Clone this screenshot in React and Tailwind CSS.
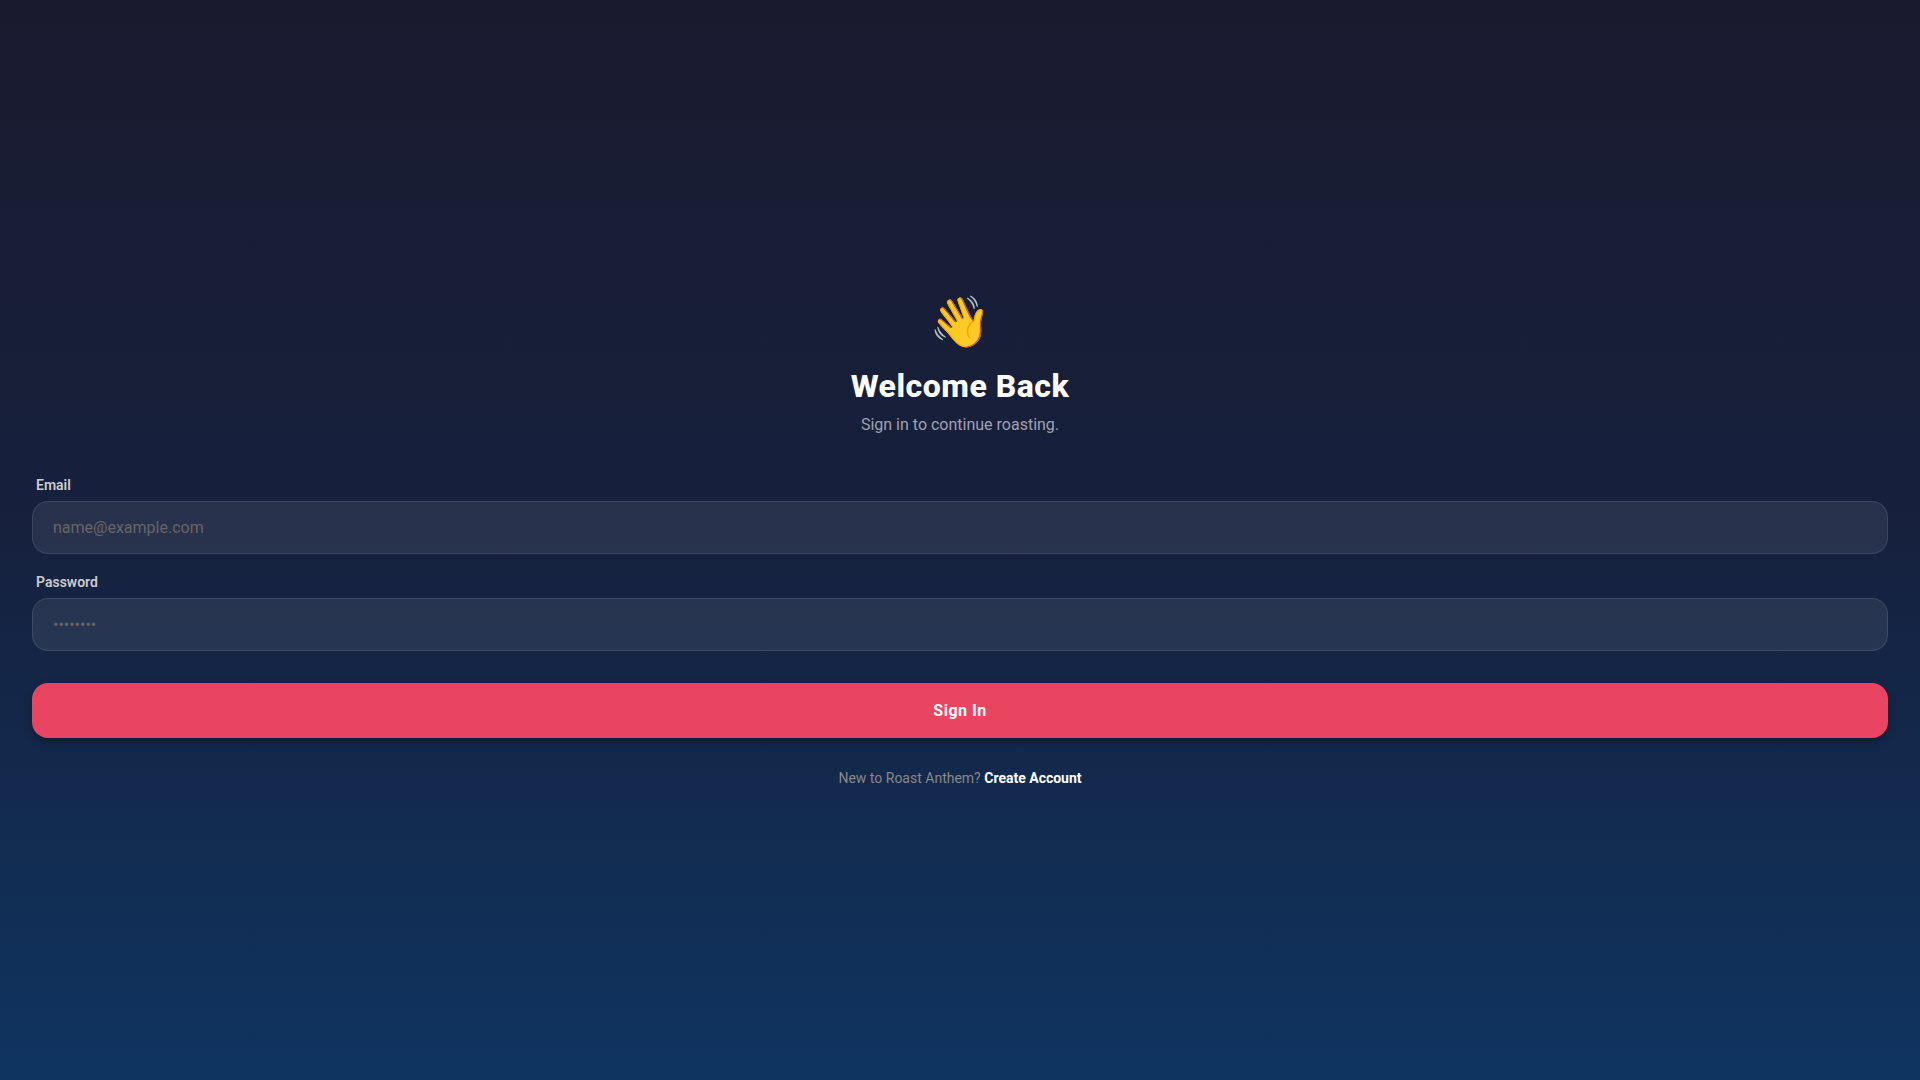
import React, { useState } from "react";

const inputClass =
  "w-full rounded-2xl border border-white/10 bg-white/8 px-5 py-4 text-base leading-[19px] text-white outline-none placeholder:text-[#666666] focus:border-[#e94560]";

const labelClass = "mb-2 ml-1 block text-sm leading-4 font-semibold text-[#cccccc]";

export default function App() {
  const [email, setEmail] = useState("");
  const [password, setPassword] = useState("");

  const handleSubmit = (e) => {
    e.preventDefault();
  };

  return (
    <main className="flex min-h-screen flex-col justify-center bg-linear-to-b/srgb from-[#1a1a2e] via-[#16213e] to-[#0f3460] p-8 font-[Roboto,sans-serif]">
      {/* --- Header --- */}
      <header className="mb-10 flex flex-col items-center text-center">
        <span className="mb-4 text-[50px] leading-[57px]">👋</span>
        <h1 className="mb-2 text-[32px] leading-[38px] font-extrabold tracking-[0.5px] text-white">
          Welcome Back
        </h1>
        <p className="text-base leading-6 text-[#a0a0b0]">
          Sign in to continue roasting.
        </p>
      </header>

      {/* --- Form --- */}
      <form onSubmit={handleSubmit}>
        <div className="mb-5">
          <label htmlFor="email" className={labelClass}>
            Email
          </label>
          <input
            id="email"
            type="email"
            value={email}
            onChange={(e) => setEmail(e.target.value)}
            placeholder="name@example.com"
            className={inputClass}
          />
        </div>
        <div className="mb-8">
          <label htmlFor="password" className={labelClass}>
            Password
          </label>
          <input
            id="password"
            type="password"
            value={password}
            onChange={(e) => setPassword(e.target.value)}
            placeholder="••••••••"
            className={inputClass}
          />
        </div>
        <button
          type="submit"
          className="w-full rounded-2xl bg-[#e94560] py-[18px] text-base leading-[19px] font-bold tracking-[0.5px] text-white shadow-[0_4px_8px_rgba(0,0,0,0.3)]"
        >
          Sign In
        </button>
      </form>

      <p className="mt-8 text-center text-sm leading-4 text-[#888888]">
        New to Roast Anthem?{" "}
        <a href="#" className="font-bold text-white">
          Create Account
        </a>
      </p>
    </main>
  );
}
